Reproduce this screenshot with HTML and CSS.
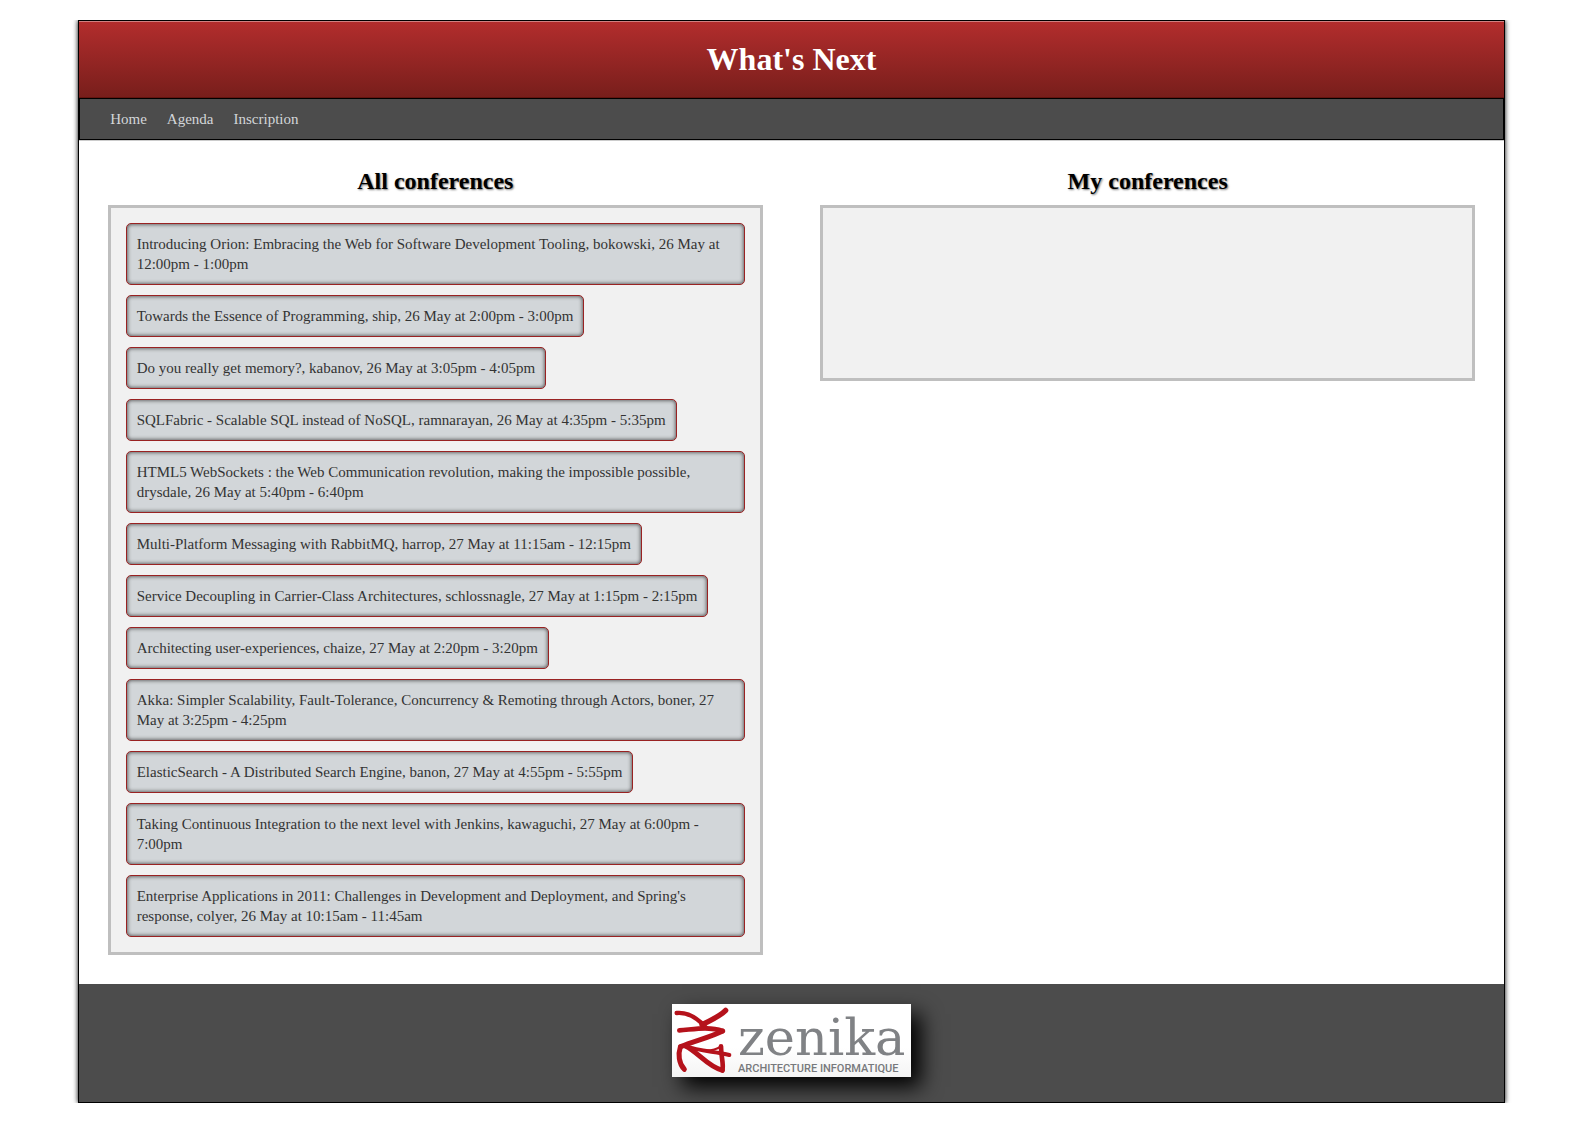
FILE: index.html
```html
<!DOCTYPE html>
<html lang="en">
<head>
<meta charset="utf-8">
<title>What's Next</title>
<link rel="stylesheet" href="styles.css">
</head>
<body>
<div class="page">
  <header class="banner"><h1>What's Next</h1></header>
  <nav class="menu">
    <a href="#home">Home</a>
    <a href="#agenda">Agenda</a>
    <a href="#inscription">Inscription</a>
  </nav>
  <main class="columns">
    <section class="column">
      <h2>All conferences</h2>
      <ul class="panel">
        <li>Introducing Orion: Embracing the Web for Software Development Tooling, bokowski, 26 May at 12:00pm - 1:00pm</li>
        <li>Towards the Essence of Programming, ship, 26 May at 2:00pm - 3:00pm</li>
        <li>Do you really get memory?, kabanov, 26 May at 3:05pm - 4:05pm</li>
        <li>SQLFabric - Scalable SQL instead of NoSQL, ramnarayan, 26 May at 4:35pm - 5:35pm</li>
        <li>HTML5 WebSockets : the Web Communication revolution, making the impossible possible, drysdale, 26 May at 5:40pm - 6:40pm</li>
        <li>Multi-Platform Messaging with RabbitMQ, harrop, 27 May at 11:15am - 12:15pm</li>
        <li>Service Decoupling in Carrier-Class Architectures, schlossnagle, 27 May at 1:15pm - 2:15pm</li>
        <li>Architecting user-experiences, chaize, 27 May at 2:20pm - 3:20pm</li>
        <li>Akka: Simpler Scalability, Fault-Tolerance, Concurrency &amp; Remoting through Actors, boner, 27 May at 3:25pm - 4:25pm</li>
        <li>ElasticSearch - A Distributed Search Engine, banon, 27 May at 4:55pm - 5:55pm</li>
        <li>Taking Continuous Integration to the next level with Jenkins, kawaguchi, 27 May at 6:00pm - 7:00pm</li>
        <li>Enterprise Applications in 2011: Challenges in Development and Deployment, and Spring's response, colyer, 26 May at 10:15am - 11:45am</li>
      </ul>
    </section>
    <section class="column">
      <h2>My conferences</h2>
      <ul class="panel"></ul>
    </section>
  </main>
  <footer class="footer">
    <svg class="logo" viewBox="0 0 239 73" role="img" aria-label="Zenika, architecture informatique">
      <defs>
        <linearGradient id="paper" x1="0" y1="0" x2="0" y2="1">
          <stop offset="0.6" stop-color="#fff"/><stop offset="1" stop-color="#f4f4f4"/>
        </linearGradient>
      </defs>
      <rect width="239" height="73" fill="url(#paper)"/>
      <g class="mark" transform="scale(.3333)">
        <path d="M14 27C45 24 75 40 103 72" stroke-width="13"/>
        <path d="M161 19C145 36 115 50 90 62" stroke-width="16"/>
        <path d="M22 79C65 76 110 66 152 81" stroke-width="14"/>
        <path d="M152 81C120 98 70 110 26 128" stroke-width="15"/>
        <path d="M25 129C18 150 20 178 37 196" stroke-width="15"/>
        <path d="M40 126C80 145 105 187 151 199" stroke-width="15"/>
        <path d="M151 199C156 180 147 160 147 127" stroke-width="14"/>
        <path d="M147 127C130 138 110 142 88 138" stroke-width="6"/>
        <path d="M42 126C80 142 130 142 172 153" stroke-width="12"/>
      </g>
      <text class="name" x="66" y="51">zenika</text>
      <text class="tagline" x="66" y="68">ARCHITECTURE INFORMATIQUE</text>
    </svg>
  </footer>
</div>
</body>
</html>
```
FILE: styles.css
```css
body {
  margin: 20px 0;
  background: #fff;
  color: #333;
  font: 16px/20px "Liberation Serif", "Times New Roman", serif;
}

.page {
  width: 90%;
  margin: 0 auto;
  border: 1px solid #000;
  box-shadow: 0 0 5px #000;
}

.banner {
  padding: 20px;
  background: linear-gradient(#b32d2d, #771e1b);
  box-shadow: inset 0 1px 0 #d08080, inset 0 -1px 0 #64140f;
}

h1 {
  margin: 0;
  color: #fff;
  font-size: 32px;
  line-height: 37px;
  text-align: center;
}

.menu {
  display: flex;
  gap: 20px;
  padding: 10px 30px;
  border: 1px solid #000;
  background: #4c4c4c;
  box-shadow: 0 1px 0 #ccc;
  font-size: 15px;
}

.menu a {
  color: #d3d6d9;
  text-decoration: none;
}

.columns {
  display: grid;
  grid-template-columns: 1fr 1fr;
  align-items: start;
}

.column {
  padding: 4%;
}

h2 {
  margin: 0 0 10px;
  color: #000;
  font-size: 24px;
  line-height: 27px;
  text-align: center;
  text-shadow: 1px 1px 2px #777;
}

.panel {
  display: flex;
  flex-direction: column;
  align-items: flex-start;
  gap: 10px;
  min-height: 140px;
  margin: 0;
  padding: 15px;
  border: 3px solid #bfbfbf;
  background: #f1f1f1;
  list-style: none;
}

.panel li {
  padding: 10px;
  border: 1px solid #922;
  border-radius: 5px;
  background: #d2d6d9;
  box-shadow: inset 0 0 4px #333;
  font-size: 15px;
}

.footer {
  display: flex;
  justify-content: center;
  padding: 20px 20px 25px;
  background: #4c4c4c;
}

.logo {
  width: 239px;
  height: 73px;
  box-shadow: 10px 10px 20px #000;
}

.mark {
  fill: none;
  stroke: #b5121b;
  stroke-linecap: round;
  stroke-linejoin: round;
}

.name {
  fill: #808285;
  font: 51px "DejaVu Serif", serif;
}

.tagline {
  fill: #77797c;
  font: 500 11px Roboto, sans-serif;
}
```
